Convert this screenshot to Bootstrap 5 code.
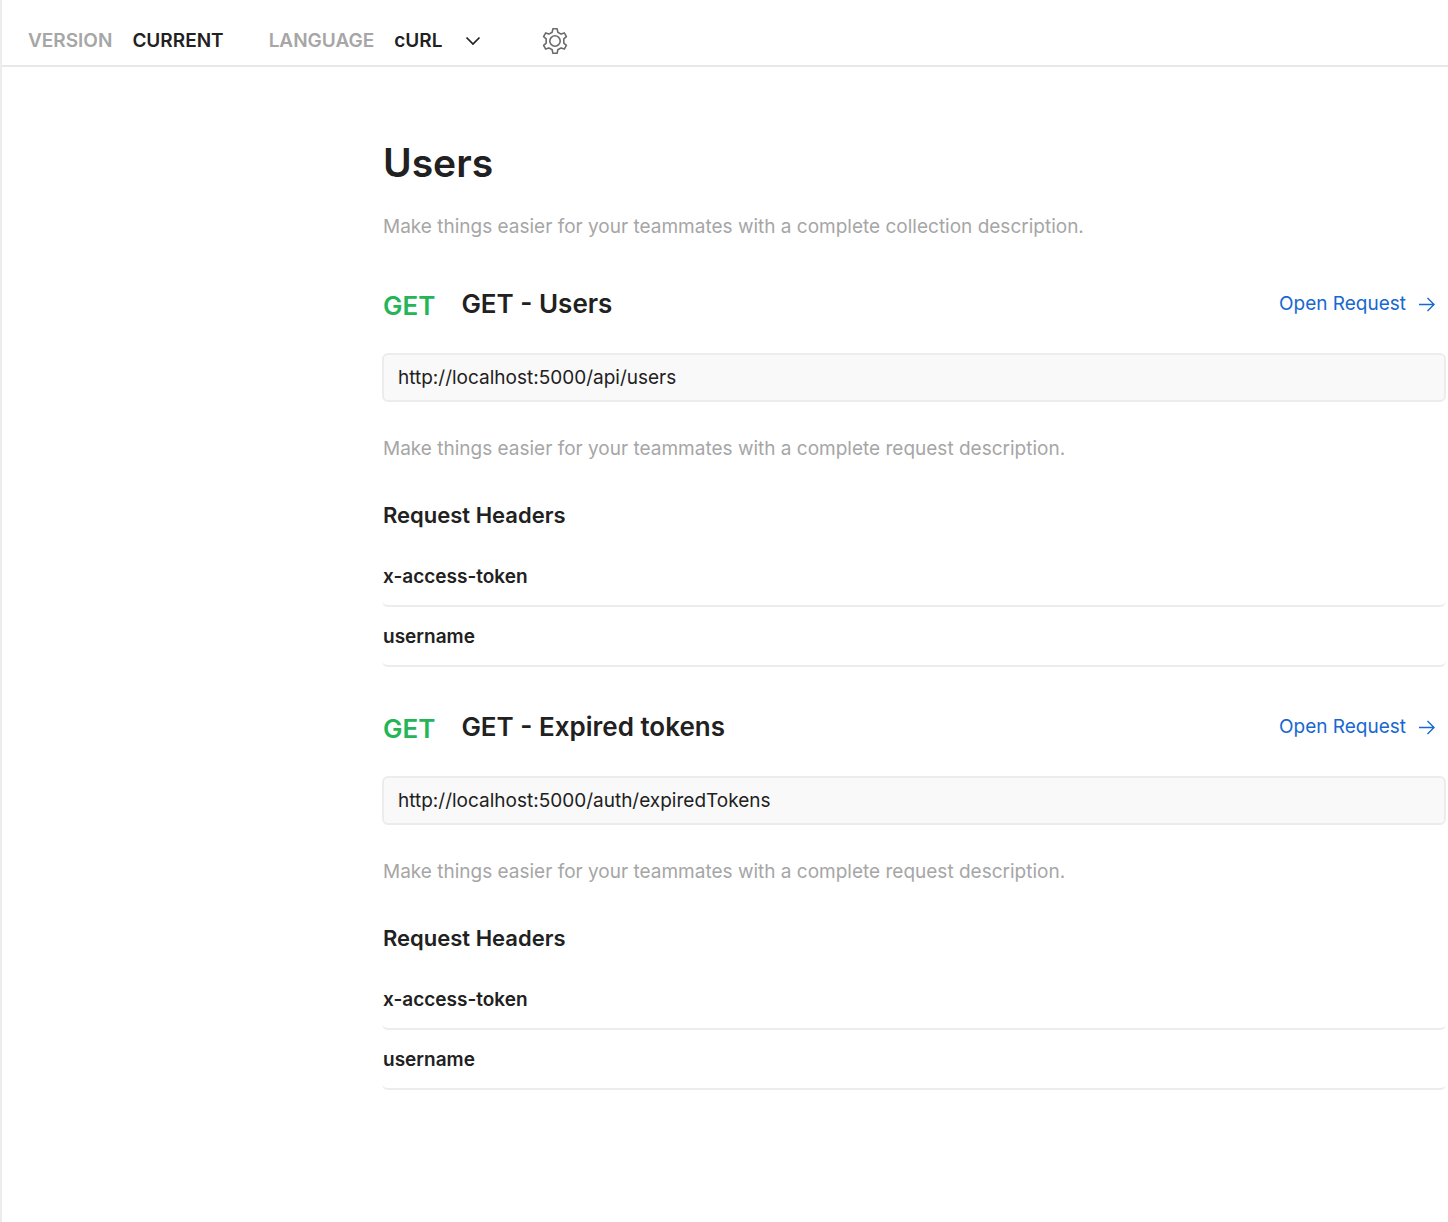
<!DOCTYPE html>
<html lang="en">
<head>
<meta charset="utf-8">
<meta name="viewport" content="width=device-width, initial-scale=1">
<title>Users</title>
<link rel="stylesheet" href="https://cdn.jsdelivr.net/npm/bootstrap@5.3.0/dist/css/bootstrap.min.css">
<style>
  body { font-family: Inter, "Liberation Sans", sans-serif; font-size: 19px; line-height: 28px; color: #212121; }
  .doc-frame { border-left: 2px solid #ececec; }
  .doc-bar { border-bottom: 2px solid #e8e8e8; padding: 16px 26px 0; height: 67px; gap: 45px; }
  .bar-text { font-weight: 600; }
  .bar-tag, .hint { color: #a6a6a6; }
  .bar-group { gap: 20px; }
  .lang-select { width: 87px; padding: 0 20px 0 0; border: 0; font-size: 19px; line-height: 28px; font-weight: 600; color: #212121;
    background: url("data:image/svg+xml,%3csvg xmlns='http://www.w3.org/2000/svg' viewBox='0 0 16 10'%3e%3cpath fill='none' stroke='%23212121' stroke-width='1.7' d='M1.5 1.5 8 8l6.500-6.500'/%3e%3c/svg%3e") no-repeat right center / 16px 10px; }
  .gear-btn { line-height: 0; color: #6b6b6b; margin-left: 15px; }
  .doc-body { padding: 72px 2px 60px 380px; }
  .doc-title, .hint, .sub-title, .verb { padding-left: 1px; }
  .doc-title { font-size: 39px; line-height: 48px; font-weight: 600; margin-bottom: 26px; }
  .hint { margin: 0; }
  .req { padding-top: 43px; }
  .req + .req { padding-top: 40px; }
  .req-head { gap: 26px; }
  .req-title, .verb { font-size: 26px; line-height: 36px; font-weight: 600; margin: 0; }
  .verb { color: #24b559; }
  .open-link { color: #1768d0; gap: 13px; margin-right: 11px; }
  .url-box { height: 49px; margin: 29px 0 33px; padding: 0 14px 1px; border: 2px solid #ececec; border-radius: 6px; background: #f9f9f9; font-size: 19px; color: #212121; }
  .sub-title { font-size: 22px; line-height: 32px; font-weight: 600; margin: 36px 0 16px; }
  .key-row { height: 60px; padding: 2px 0 0 1px; border: 0; border-bottom: 2px solid #ececec; border-radius: 6px; font-weight: 600; color: #212121; }
</style>
<script defer src="https://cdn.jsdelivr.net/npm/bootstrap@5.3.0/dist/js/bootstrap.bundle.min.js"></script>
</head>
<body>
<div class="doc-frame min-vh-100">
  <header class="doc-bar d-flex align-items-center">
    <div class="bar-group bar-text d-flex"><span class="bar-tag">VERSION</span><span>CURRENT</span></div>
    <div class="bar-group d-flex align-items-center">
      <label class="bar-text bar-tag" for="lang">LANGUAGE</label>
      <select class="form-select lang-select" id="lang"><option>cURL</option></select>
    </div>
    <button class="btn gear-btn p-0 border-0" type="button" aria-label="Settings">
      <svg width="28" height="28" viewBox="0 0 28 28" fill="none" stroke="currentColor" stroke-width="1.6" stroke-linejoin="round"><path d="M11.900 1.700h4.200l.7 3.500 3.300 1.900 3.200-1.200 2.100 3.700-2.600 2.300v4.200l2.600 2.300-2.100 3.700-3.200-1.200-3.300 1.900-.7 3.500h-4.200l-.7-3.500-3.300-1.900-3.200 1.200-2.100-3.700 2.600-2.300v-4.200L2.600 9.600l2.100-3.700 3.200 1.200 3.300-1.900z"/><circle cx="14" cy="14" r="5.200"/></svg>
    </button>
  </header>
  <main class="doc-body">
    <h1 class="doc-title">Users</h1>
    <p class="hint">Make things easier for your teammates with a complete collection description.</p>

    <section class="req">
      <div class="req-head d-flex align-items-center">
        <span class="verb pt-1">GET</span>
        <h2 class="req-title">GET - Users</h2>
        <a class="open-link d-flex align-items-center ms-auto text-decoration-none" href="#">Open Request
          <svg width="16" height="16" viewBox="0 0 16 16" fill="none" stroke="currentColor" stroke-width="1.4"><path d="M0 8.500h15M8.500 2l6.500 6.500L8.500 15"/></svg></a>
      </div>
      <input class="form-control url-box" type="text" readonly aria-label="Request URL" value="http://localhost:5000/api/users">
      <p class="hint">Make things easier for your teammates with a complete request description.</p>
      <h3 class="sub-title">Request Headers</h3>
      <ul class="list-group">
        <li class="list-group-item key-row d-flex align-items-center">x-access-token</li>
        <li class="list-group-item key-row d-flex align-items-center">username</li>
      </ul>
    </section>

    <section class="req">
      <div class="req-head d-flex align-items-center">
        <span class="verb pt-1">GET</span>
        <h2 class="req-title">GET - Expired tokens</h2>
        <a class="open-link d-flex align-items-center ms-auto text-decoration-none" href="#">Open Request
          <svg width="16" height="16" viewBox="0 0 16 16" fill="none" stroke="currentColor" stroke-width="1.4"><path d="M0 8.500h15M8.500 2l6.500 6.500L8.500 15"/></svg></a>
      </div>
      <input class="form-control url-box" type="text" readonly aria-label="Request URL" value="http://localhost:5000/auth/expiredTokens">
      <p class="hint">Make things easier for your teammates with a complete request description.</p>
      <h3 class="sub-title">Request Headers</h3>
      <ul class="list-group">
        <li class="list-group-item key-row d-flex align-items-center">x-access-token</li>
        <li class="list-group-item key-row d-flex align-items-center">username</li>
      </ul>
    </section>
  </main>
</div>
</body>
</html>
